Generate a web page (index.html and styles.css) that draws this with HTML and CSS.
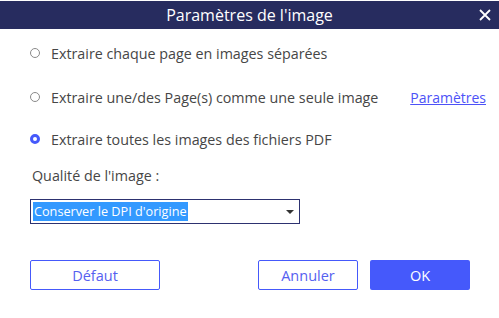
FILE: index.html
```html
<html>
<head>
  <title>Paramètres de l'image</title>
  <link rel="stylesheet" href="styles.css">
</head>
<body>

<div class="dialog">
  <div class="titlebar">
    <span class="title">Paramètres de l'image</span>
    <svg class="close" width="12" height="12" viewBox="0 0 12 12">
      <path d="M1 1 L11 11 M11 1 L1 11" stroke="#fff" stroke-width="1.8" fill="none"/>
    </svg>
  </div>

  <div class="content">
    <div class="option row-1">
      <span class="radio"></span>
      <span class="label">Extraire chaque page en images séparées</span>
    </div>
    <div class="option row-2">
      <span class="radio"></span>
      <span class="label">Extraire une/des Page(s) comme une seule image</span>
      <a class="link" href="#">Paramètres</a>
    </div>
    <div class="option row-3">
      <span class="radio checked"></span>
      <span class="label">Extraire toutes les images des fichiers PDF</span>
    </div>

    <div class="quality-label">Qualité de l'image :</div>
    <div class="select">
      <span class="selected">Conserver le DPI d'origine</span>
      <span class="arrow"></span>
    </div>
  </div>

  <div class="footer">
    <button class="btn btn-outline btn-default">Défaut</button>
    <button class="btn btn-outline btn-cancel">Annuler</button>
    <button class="btn btn-primary">OK</button>
  </div>
</div>

</body>
</html>
```

FILE: styles.css
```css
:root {
  --navy: #272c5f;
  --blue: #4559fb;
  --text: #464646;
}

* {
  box-sizing: border-box;
}

body {
  margin: 0;
  font-family: 'Open Sans', 'Noto Sans', sans-serif;
  background: #fff;
  color: var(--text);
}

.dialog {
  width: 499px;
  height: 318px;
  padding-top: 1px;
  display: flex;
  flex-direction: column;
}

.titlebar {
  height: 28px;
  background: var(--navy);
  display: flex;
  align-items: center;
  justify-content: center;
  position: relative;
}

.title {
  color: #fff;
  font-size: 16px;
  line-height: 28px;
}

.close {
  position: absolute;
  right: 8px;
  top: 8px;
}

.content {
  padding: 14px 13px 0 30px;
  display: flex;
  flex-direction: column;
}

.option {
  height: 20px;
  display: flex;
  align-items: center;
  font-size: 14.3px;
}

.row-2 {
  margin-top: 24px;
}

.row-3 {
  margin-top: 22px;
}

.radio {
  width: 10px;
  height: 10px;
  border: 1px solid #8a8a8a;
  border-radius: 50%;
  margin-right: 11px;
  flex-shrink: 0;
}

.radio.checked {
  border: 3px solid var(--blue);
}

.link {
  margin-left: auto;
  font-size: 14px;
  color: #4d52f7;
  text-decoration: underline;
}

.quality-label {
  margin-top: 17px;
  height: 20px;
  line-height: 20px;
  font-size: 14.3px;
  padding-left: 2px;
}

.select {
  margin-top: 13px;
  width: 270px;
  height: 25px;
  border: 1px solid #2d3270;
  display: flex;
  align-items: center;
  padding: 0 2px;
}

.selected {
  background: #3399ff;
  color: #fff;
  font-size: 12.7px;
  line-height: 19px;
  height: 19px;
  padding: 0 1px;
}

.arrow {
  margin-left: auto;
  margin-right: 3px;
  width: 0;
  height: 0;
  border-left: 4px solid transparent;
  border-right: 4px solid transparent;
  border-top: 4px solid #333;
}

.footer {
  margin-top: 36px;
  padding: 0 29px 0 30px;
  display: flex;
}

.btn {
  height: 30px;
  font-family: inherit;
  font-size: 14.5px;
  border-radius: 2px;
  cursor: pointer;
}

.btn-outline {
  background: #fff;
  border: 1px solid var(--blue);
  color: #5560f0;
}

.btn-default {
  width: 130px;
}

.btn-cancel {
  width: 100px;
  margin-left: auto;
}

.btn-primary {
  width: 100px;
  margin-left: 12px;
  background: var(--blue);
  border: none;
  color: #fff;
}
```
